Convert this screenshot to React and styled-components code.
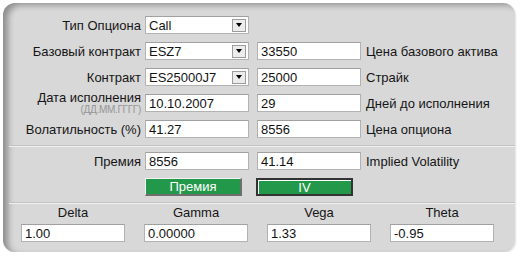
import React from "react"
import styled, { createGlobalStyle } from "styled-components"

const GlobalStyle = createGlobalStyle`
  body {
    margin: 0;
    background: #ffffff;
    font-family: "Liberation Sans", Arial, sans-serif;
  }
`

const Panel = styled.div`
  margin: 3px 0 0 3px;
  width: 512px;
  height: 249px;
  box-sizing: border-box;
  padding-top: 13px;
  border-radius: 12px;
  background: #d8d8d8;
  box-shadow: inset 6px 3px 6px -1px rgba(0, 0, 0, 0.34),
    1px 1px 2px rgba(0, 0, 0, 0.12);
  display: flex;
  flex-direction: column;
  color: #151515;
  font-size: 13px;
`

const Section = styled.div`
  display: flex;
  flex-direction: column;
  gap: 8px;
`

const Row = styled.div`
  display: flex;
  align-items: center;
  height: 18px;
`

const Label = styled.div`
  width: 138px;
  margin-right: 4px;
  display: flex;
  flex-direction: column;
  align-items: flex-end;
  line-height: 13px;
  white-space: nowrap;
`

const SubLabel = styled.span`
  font-size: 10px;
  line-height: 11px;
  letter-spacing: -0.3px;
  color: #959595;
`

const Input = styled.input`
  width: ${({ $w }) => $w || 104}px;
  height: 18px;
  margin: 0 0 0 ${({ $ml }) => $ml || 0}px;
  box-sizing: border-box;
  padding: 0 3px;
  border: 1px solid #b2b2b2;
  border-top-color: #a0a0a0;
  background: #ffffff;
  font-family: inherit;
  font-size: 13px;
  color: #111;
  outline: none;
`

const Select = styled.div`
  width: 104px;
  height: 18px;
  box-sizing: border-box;
  border: 1px solid #b2b2b2;
  border-top-color: #a0a0a0;
  background: #ffffff;
  display: flex;
  align-items: center;
  padding-left: 3px;
`

const SelectText = styled.span`
  flex: 1;
`

const ArrowBox = styled.span`
  width: 14px;
  height: 13px;
  margin-right: 2px;
  box-sizing: border-box;
  border: 1px solid #9c9c9c;
  background: #ececec;
  display: flex;
  align-items: center;
  justify-content: center;

  &::after {
    content: "";
    border-left: 3.5px solid transparent;
    border-right: 3.5px solid transparent;
    border-top: 4px solid #000;
  }
`

const SideLabel = styled.span`
  margin-left: 5px;
  white-space: nowrap;
`

const Divider = styled.div`
  margin: ${({ $m }) => $m};
  margin-left: 6px;
  border-top: 1px solid #c2c2c2;
  border-bottom: 1px solid #f0f0f0;
`

const ButtonRow = styled.div`
  display: flex;
  padding-left: 142px;
  gap: 14px;
  height: 18px;
`

const Button = styled.button`
  width: 97px;
  height: 18px;
  box-sizing: border-box;
  padding: 0;
  background: #22994a;
  color: #ffffff;
  font-family: inherit;
  font-size: 13px;
  border: ${({ $pressed }) => ($pressed ? "2px solid #333333" : "1px solid")};
  border-color: ${({ $pressed }) =>
    $pressed ? "#333333" : "#f2f2f2 #6e6e6e #6e6e6e #f2f2f2"};
  border-right-width: 2px;
  border-bottom-width: 2px;
  box-shadow: ${({ $pressed }) =>
    $pressed ? "inset 1px 1px 0 #ffffff" : "none"};
`

const GreekGrid = styled.div`
  display: grid;
  grid-template-columns: repeat(4, 104px);
  column-gap: 19px;
  row-gap: 4px;
  padding-left: 18px;
  margin-top: 1px;
`

const GreekLabel = styled.div`
  text-align: center;
  line-height: 15px;
`

const Dropdown = ({ value }) => (
  <Select>
    <SelectText>{value}</SelectText>
    <ArrowBox />
  </Select>
)

const greeks = [
  ["Delta", "1.00"],
  ["Gamma", "0.00000"],
  ["Vega", "1.33"],
  ["Theta", "-0.95"],
]

export default function App() {
  return (
    <>
      <GlobalStyle />
      <Panel>
        <Section>
          <Row>
            <Label>Тип Опциона</Label>
            <Dropdown value="Call" />
          </Row>
          <Row>
            <Label>Базовый контракт</Label>
            <Dropdown value="ESZ7" />
            <Input $ml={8} value="33550" readOnly />
            <SideLabel>Цена базового актива</SideLabel>
          </Row>
          <Row>
            <Label>Контракт</Label>
            <Dropdown value="ES25000J7" />
            <Input $ml={8} value="25000" readOnly />
            <SideLabel>Страйк</SideLabel>
          </Row>
          <Row>
            <Label>
              Дата исполнения
              <SubLabel>(ДД.ММ.ГГГГ)</SubLabel>
            </Label>
            <Input value="10.10.2007" readOnly />
            <Input $ml={8} value="29" readOnly />
            <SideLabel>Дней до исполнения</SideLabel>
          </Row>
          <Row>
            <Label>Волатильность (%)</Label>
            <Input value="41.27" readOnly />
            <Input $ml={8} value="8556" readOnly />
            <SideLabel>Цена опциона</SideLabel>
          </Row>
        </Section>
        <Divider $m="7px 0 5px" />
        <Section>
          <Row>
            <Label>Премия</Label>
            <Input value="8556" readOnly />
            <Input $ml={8} value="41.14" readOnly />
            <SideLabel>Implied Volatility</SideLabel>
          </Row>
          <ButtonRow>
            <Button>Премия</Button>
            <Button $pressed>IV</Button>
          </ButtonRow>
        </Section>
        <Divider $m="6px 0 0" />
        <GreekGrid>
          {greeks.map(([name]) => (
            <GreekLabel key={name}>{name}</GreekLabel>
          ))}
          {greeks.map(([name, value]) => (
            <Input key={name} value={value} readOnly />
          ))}
        </GreekGrid>
      </Panel>
    </>
  )
}
